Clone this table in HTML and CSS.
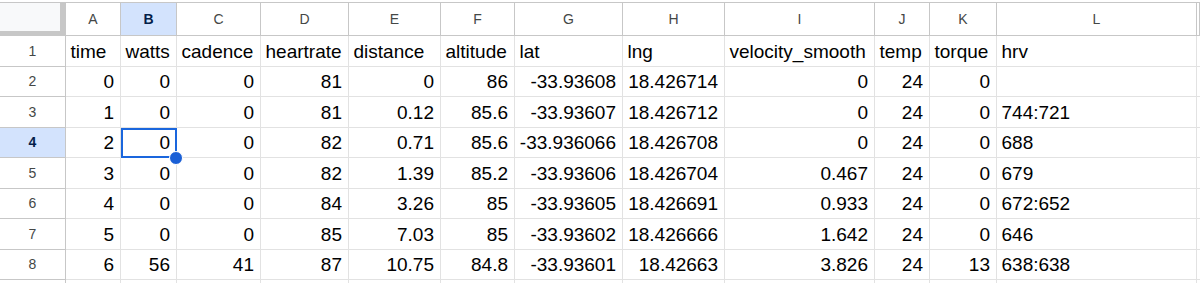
FILE: index.html
```html
<!DOCTYPE html>
<html lang="en">
<head>
<meta charset="utf-8">
<title>Sheet</title>
<link rel="stylesheet" href="styles.css">
</head>
<body>
<div class="sheet">
  <div class="row head">
    <div class="corner"></div>
    <div class="ch">A</div>
    <div class="ch sel">B</div>
    <div class="ch">C</div>
    <div class="ch">D</div>
    <div class="ch">E</div>
    <div class="ch">F</div>
    <div class="ch">G</div>
    <div class="ch">H</div>
    <div class="ch">I</div>
    <div class="ch">J</div>
    <div class="ch">K</div>
    <div class="ch">L</div>
    <div class="ch"></div>
  </div>
  <div class="row">
    <div class="rh">1</div>
    <div class="c">time</div>
    <div class="c">watts</div>
    <div class="c">cadence</div>
    <div class="c">heartrate</div>
    <div class="c">distance</div>
    <div class="c">altitude</div>
    <div class="c">lat</div>
    <div class="c">lng</div>
    <div class="c">velocity_smooth</div>
    <div class="c">temp</div>
    <div class="c">torque</div>
    <div class="c">hrv</div>
    <div class="c"></div>
  </div>
  <div class="row">
    <div class="rh">2</div>
    <div class="c n">0</div>
    <div class="c n">0</div>
    <div class="c n">0</div>
    <div class="c n">81</div>
    <div class="c n">0</div>
    <div class="c n">86</div>
    <div class="c n">-33.93608</div>
    <div class="c n">18.426714</div>
    <div class="c n">0</div>
    <div class="c n">24</div>
    <div class="c n">0</div>
    <div class="c"></div>
    <div class="c"></div>
  </div>
  <div class="row">
    <div class="rh">3</div>
    <div class="c n">1</div>
    <div class="c n">0</div>
    <div class="c n">0</div>
    <div class="c n">81</div>
    <div class="c n">0.12</div>
    <div class="c n">85.6</div>
    <div class="c n">-33.93607</div>
    <div class="c n">18.426712</div>
    <div class="c n">0</div>
    <div class="c n">24</div>
    <div class="c n">0</div>
    <div class="c">744:721</div>
    <div class="c"></div>
  </div>
  <div class="row">
    <div class="rh sel">4</div>
    <div class="c n">2</div>
    <div class="c n selected">0</div>
    <div class="c n">0</div>
    <div class="c n">82</div>
    <div class="c n">0.71</div>
    <div class="c n">85.6</div>
    <div class="c n">-33.936066</div>
    <div class="c n">18.426708</div>
    <div class="c n">0</div>
    <div class="c n">24</div>
    <div class="c n">0</div>
    <div class="c">688</div>
    <div class="c"></div>
  </div>
  <div class="row">
    <div class="rh">5</div>
    <div class="c n">3</div>
    <div class="c n">0</div>
    <div class="c n">0</div>
    <div class="c n">82</div>
    <div class="c n">1.39</div>
    <div class="c n">85.2</div>
    <div class="c n">-33.93606</div>
    <div class="c n">18.426704</div>
    <div class="c n">0.467</div>
    <div class="c n">24</div>
    <div class="c n">0</div>
    <div class="c">679</div>
    <div class="c"></div>
  </div>
  <div class="row">
    <div class="rh">6</div>
    <div class="c n">4</div>
    <div class="c n">0</div>
    <div class="c n">0</div>
    <div class="c n">84</div>
    <div class="c n">3.26</div>
    <div class="c n">85</div>
    <div class="c n">-33.93605</div>
    <div class="c n">18.426691</div>
    <div class="c n">0.933</div>
    <div class="c n">24</div>
    <div class="c n">0</div>
    <div class="c">672:652</div>
    <div class="c"></div>
  </div>
  <div class="row">
    <div class="rh">7</div>
    <div class="c n">5</div>
    <div class="c n">0</div>
    <div class="c n">0</div>
    <div class="c n">85</div>
    <div class="c n">7.03</div>
    <div class="c n">85</div>
    <div class="c n">-33.93602</div>
    <div class="c n">18.426666</div>
    <div class="c n">1.642</div>
    <div class="c n">24</div>
    <div class="c n">0</div>
    <div class="c">646</div>
    <div class="c"></div>
  </div>
  <div class="row">
    <div class="rh">8</div>
    <div class="c n">6</div>
    <div class="c n">56</div>
    <div class="c n">41</div>
    <div class="c n">87</div>
    <div class="c n">10.75</div>
    <div class="c n">84.8</div>
    <div class="c n">-33.93601</div>
    <div class="c n">18.42663</div>
    <div class="c n">3.826</div>
    <div class="c n">24</div>
    <div class="c n">13</div>
    <div class="c">638:638</div>
    <div class="c"></div>
  </div>
  <div class="row">
    <div class="rh"></div>
    <div class="c"></div>
    <div class="c"></div>
    <div class="c"></div>
    <div class="c"></div>
    <div class="c"></div>
    <div class="c"></div>
    <div class="c"></div>
    <div class="c"></div>
    <div class="c"></div>
    <div class="c"></div>
    <div class="c"></div>
    <div class="c"></div>
    <div class="c"></div>
  </div>
</div>
</body>
</html>
```
FILE: styles.css
```css
* {
  box-sizing: border-box;
  margin: 0;
  padding: 0;
}

html, body {
  background: #ffffff;
}

body {
  width: 1200px;
  height: 283px;
  overflow: hidden;
  font-family: "Liberation Sans", Arial, sans-serif;
  color: #000000;
}

.sheet {
  --cols: 66px 55px 56px 84px 88px 92px 74px 108px 102px 150px 55px 67px 200px 1fr;
  width: 1200px;
  height: 283px;
  overflow: hidden;
  padding-top: 2px;
}

.row {
  display: grid;
  grid-template-columns: var(--cols);
  height: 30.5px;
}

.head {
  height: 34px;
  border-top: 1px solid #c7c7c7;
}

.corner {
  background: #f8f9fa;
  border-right: 6px solid #c7c7c7;
  border-bottom: 5px solid #c7c7c7;
}

.ch {
  display: flex;
  align-items: center;
  justify-content: center;
  font-size: 14px;
  color: #444746;
  border-right: 1px solid #c7c7c7;
  border-bottom: 1px solid #c7c7c7;
}

.rh {
  display: flex;
  align-items: center;
  justify-content: center;
  font-size: 14px;
  color: #444746;
  border-right: 1px solid #c7c7c7;
  border-bottom: 1px solid #c7c7c7;
}

.ch.sel,
.rh.sel {
  background: #d3e3fd;
  color: #041e49;
  font-weight: 700;
}

.c {
  display: flex;
  align-items: flex-end;
  justify-content: flex-start;
  padding: 0 6px 3px 4.5px;
  font-size: 19px;
  white-space: nowrap;
  border-right: 1px solid #e2e2e2;
  border-bottom: 1px solid #e2e2e2;
}

.c.n {
  justify-content: flex-end;
}

.selected {
  position: relative;
}

.selected::after {
  content: "";
  position: absolute;
  left: 0;
  top: 0;
  right: -1px;
  bottom: -1px;
  border: 2px solid #1a66dd;
}

.selected::before {
  content: "";
  position: absolute;
  right: -7px;
  bottom: -8px;
  width: 12px;
  height: 12px;
  border-radius: 50%;
  background: #1a5fd6;
  border: 1px solid #ffffff;
  z-index: 2;
}
```
